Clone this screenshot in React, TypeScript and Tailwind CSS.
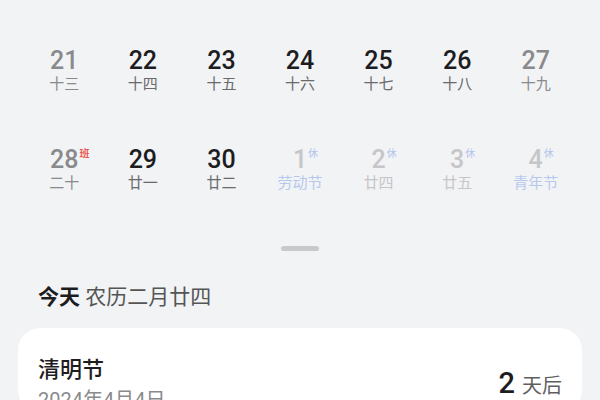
const font = { fontFamily: "Roboto, 'Noto Sans CJK SC', sans-serif" };

type Day = {
  num: string;
  lunar: string;
  tone: 'weekday' | 'weekend' | 'faded';
  tag?: 'ban' | 'xiu';
  holiday?: boolean;
};

const rows: Day[][] = [
  [
    { num: '21', lunar: '十三', tone: 'weekend' },
    { num: '22', lunar: '十四', tone: 'weekday' },
    { num: '23', lunar: '十五', tone: 'weekday' },
    { num: '24', lunar: '十六', tone: 'weekday' },
    { num: '25', lunar: '十七', tone: 'weekday' },
    { num: '26', lunar: '十八', tone: 'weekday' },
    { num: '27', lunar: '十九', tone: 'weekend' },
  ],
  [
    { num: '28', lunar: '二十', tone: 'weekend', tag: 'ban' },
    { num: '29', lunar: '廿一', tone: 'weekday' },
    { num: '30', lunar: '廿二', tone: 'weekday' },
    { num: '1', lunar: '劳动节', tone: 'faded', tag: 'xiu', holiday: true },
    { num: '2', lunar: '廿四', tone: 'faded', tag: 'xiu' },
    { num: '3', lunar: '廿五', tone: 'faded', tag: 'xiu' },
    { num: '4', lunar: '青年节', tone: 'faded', tag: 'xiu', holiday: true },
  ],
];

function numClass(tone: Day['tone']) {
  if (tone === 'weekday') return 'text-[#1d1d1f]';
  if (tone === 'weekend') return 'text-[#8a8a8c]';
  return 'text-[#c6c6c8]';
}

function lunarClass(d: Day) {
  if (d.holiday) return 'text-[#b7c8ee]';
  if (d.tone === 'weekday') return 'text-[#6a6a6d]';
  if (d.tone === 'weekend') return 'text-[#8a8a8c]';
  return 'text-[#c6c6c8]';
}

export default function App() {
  return (
    <div className="h-[400px] w-[600px] overflow-hidden bg-[#f2f3f5]" style={font}>
      <div className="flex flex-col gap-y-[53px] px-[25px] pt-[47px]">
        {rows.map((row, ri) => (
          <div key={ri} className="grid grid-cols-7">
            {row.map((d) => (
              <div key={d.num} className="flex flex-col items-center">
                <div className="relative">
                  <span className={`block text-[25px] font-medium leading-[28px] ${numClass(d.tone)}`}>{d.num}</span>
                  {d.tag && (
                    <span
                      className={`absolute left-full top-[2px] ml-[1px] text-[10px] leading-[12px] ${
                        d.tag === 'ban' ? 'font-bold text-[#e8574d]' : 'text-[#b2c4ec]'
                      }`}
                    >
                      {d.tag === 'ban' ? '班' : '休'}
                    </span>
                  )}
                </div>
                <span className={`text-[15px] leading-[18px] ${lunarClass(d)}`}>{d.lunar}</span>
              </div>
            ))}
          </div>
        ))}
      </div>

      <div className="mt-[54px] flex justify-center">
        <div className="h-[5px] w-[38px] rounded-full bg-[#c9c9cb]" />
      </div>

      <div className="mt-[34px] px-[38px] text-[21px] leading-[24px] text-[#555]">
        <span className="font-bold text-[#1d1d1f]">今天</span> 农历二月廿四
      </div>

      <div className="mx-[18px] mt-[19px] rounded-[22px] bg-white pl-[20px] pr-[20px] pt-[28px]">
        <div className="flex items-center justify-between">
          <div>
            <div className="text-[22px] font-medium leading-[28px] text-[#1d1d1f]">清明节</div>
            <div className="mt-[4px] text-[20px] leading-[24px] text-[#8a8a8c]">2024年4月4日</div>
          </div>
          <div className="flex items-baseline gap-[7px]">
            <span className="text-[29px] font-medium leading-[32px] text-[#1d1d1f]">2</span>
            <span className="text-[20px] text-[#5f5f62]">天后</span>
          </div>
        </div>
      </div>
    </div>
  );
}
